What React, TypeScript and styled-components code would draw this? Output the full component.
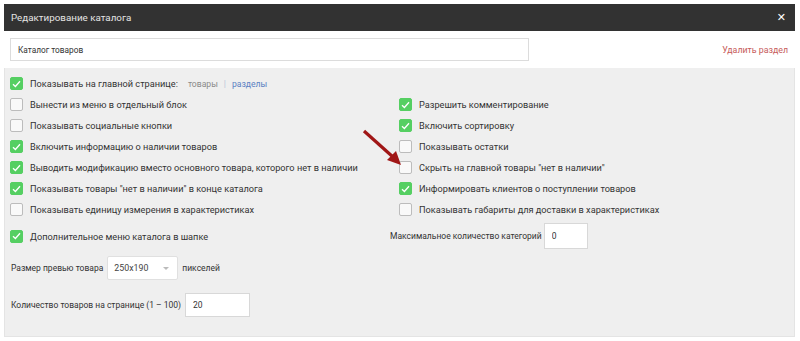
import styled, { createGlobalStyle } from 'styled-components';

const GlobalStyle = createGlobalStyle`
  body {
    margin: 0;
    background: #ffffff;
    font-family: Roboto, "Liberation Sans", Arial, sans-serif;
    color: #333333;
  }
`;

const Panel = styled.div`
  width: 791px;
  margin: 4px 0 0 4px;
  position: relative;
`;

const Header = styled.div`
  height: 27px;
  background: #323232;
  color: #e4e4e4;
  display: flex;
  align-items: center;
  justify-content: space-between;
  padding: 0 9px 0 7px;
  font-size: 9.8px;
`;

const CloseButton = styled.button`
  background: none;
  border: none;
  color: #ffffff;
  font-size: 11px;
  font-weight: bold;
  line-height: 1;
  padding: 0;
  cursor: pointer;
  font-family: "DejaVu Sans", sans-serif;
`;

const NameRow = styled.div`
  height: 37px;
  background: #ffffff;
  display: flex;
  align-items: center;
  justify-content: space-between;
  padding: 0 7px 0 6px;
  box-sizing: border-box;
`;

const NameInput = styled.input`
  width: 519px;
  height: 23px;
  box-sizing: border-box;
  border: 1px solid #dcdcdc;
  padding: 0 7px;
  font-family: inherit;
  font-size: 8.3px;
  color: #333;
  outline: none;
`;

const DeleteLink = styled.a`
  color: #c65a5a;
  font-size: 8.8px;
  cursor: pointer;
`;

const Body = styled.div`
  background: #efefef;
  border: 1px solid #e4e4e4;
  border-top: none;
  padding: 5px 6px 19px 5px;
  height: 269px;
  box-sizing: border-box;
  position: relative;
`;

const OptionsGrid = styled.div`
  display: grid;
  grid-template-columns: 389px 1fr;
  grid-auto-rows: 21px;
`;

const Option = styled.label`
  display: flex;
  align-items: center;
  gap: 7px;
  font-size: 9.2px;
  white-space: nowrap;
  cursor: pointer;
`;

const Box = styled.span<{ $checked?: boolean }>`
  width: 13px;
  height: 13px;
  box-sizing: border-box;
  border-radius: 2px;
  flex-shrink: 0;
  display: flex;
  align-items: center;
  justify-content: center;
  background: ${(p) => (p.$checked ? '#55cf62' : '#f9f9f9')};
  border: 1px solid ${(p) => (p.$checked ? '#55cf62' : '#bcbcbc')};
`;

const Muted = styled.span`
  color: #8a8a8a;
  font-size: 8.6px;
  margin-left: 3px;
`;

const Sep = styled.span`
  color: #b8c4d8;
  font-size: 8.6px;
  margin: 0 6px;
`;

const Blue = styled.span`
  color: #5a80c2;
  font-size: 8.6px;
`;

const FieldsRow = styled.div`
  display: grid;
  grid-template-columns: 389px 1fr;
  align-items: center;
  margin-top: 3px;
`;

const Field = styled.div<{ $shift?: number; $gap?: number }>`
  display: flex;
  align-items: center;
  gap: ${(p) => p.$gap ?? 4}px;
  font-size: 8.5px;
  white-space: nowrap;
  margin-left: ${(p) => p.$shift ?? 0}px;
`;

const SmallInput = styled.input<{ $w: number; $h: number }>`
  width: ${(p) => p.$w}px;
  height: ${(p) => p.$h}px;
  box-sizing: border-box;
  border: 1px solid #d8d8d8;
  background: #fff;
  padding: 0 7px;
  font-family: inherit;
  font-size: 8.5px;
  color: #333;
  outline: none;
`;

const Select = styled.div`
  width: 71px;
  height: 24px;
  box-sizing: border-box;
  border: 1px solid #e0e0e0;
  border-radius: 2px;
  background: #fff;
  display: flex;
  align-items: center;
  justify-content: space-between;
  padding: 0 8px 0 6px;
  font-size: 8.8px;
  color: #444;
`;

const Caret = styled.span`
  width: 0;
  height: 0;
  border-left: 3px solid transparent;
  border-right: 3px solid transparent;
  border-top: 3px solid #bbb;
`;

const FieldBlock = styled.div<{ $top: number }>`
  margin-top: ${(p) => p.$top}px;
`;

const Arrow = styled.svg`
  position: absolute;
  left: 357px;
  top: 61px;
  pointer-events: none;
`;

const Check = () => (
  <svg width="9" height="8" viewBox="0 0 9 8">
    <path d="M1 4.2 L3.4 6.5 L8 1.2" fill="none" stroke="#fff" strokeWidth="1.3" />
  </svg>
);

type Opt = { text: string; checked: boolean } | null;

const rows: [Opt, Opt][] = [
  [{ text: 'Вынести из меню в отдельный блок', checked: false }, { text: 'Разрешить комментирование', checked: true }],
  [{ text: 'Показывать социальные кнопки', checked: false }, { text: 'Включить сортировку', checked: true }],
  [{ text: 'Включить информацию о наличии товаров', checked: true }, { text: 'Показывать остатки', checked: false }],
  [
    { text: 'Выводить модификацию вместо основного товара, которого нет в наличии', checked: true },
    { text: 'Скрыть на главной товары "нет в наличии"', checked: false },
  ],
  [
    { text: 'Показывать товары "нет в наличии" в конце каталога', checked: true },
    { text: 'Информировать клиентов о поступлении товаров', checked: true },
  ],
  [
    { text: 'Показывать единицу измерения в характеристиках', checked: false },
    { text: 'Показывать габариты для доставки в характеристиках', checked: false },
  ],
];

const CheckOption = ({ opt }: { opt: Opt }) =>
  opt ? (
    <Option>
      <Box $checked={opt.checked}>{opt.checked && <Check />}</Box>
      {opt.text}
    </Option>
  ) : (
    <div />
  );

export default function App() {
  return (
    <>
      <GlobalStyle />
      <Panel>
        <Header>
          <span>Редактирование каталога</span>
          <CloseButton>✕</CloseButton>
        </Header>
        <NameRow>
          <NameInput defaultValue="Каталог товаров" />
          <DeleteLink>Удалить раздел</DeleteLink>
        </NameRow>
        <Body>
          <OptionsGrid>
            <Option>
              <Box $checked>
                <Check />
              </Box>
              Показывать на главной странице:
              <span>
                <Muted>товары</Muted>
                <Sep>|</Sep>
                <Blue>разделы</Blue>
              </span>
            </Option>
            <div />
            {rows.map(([l, r], i) => [
              <CheckOption key={`l${i}`} opt={l} />,
              <CheckOption key={`r${i}`} opt={r} />,
            ])}
          </OptionsGrid>
          <FieldsRow>
            <CheckOption opt={{ text: 'Дополнительное меню каталога в шапке', checked: true }} />
            <Field $shift={-9} $gap={2}>
              Максимальное количество категорий
              <SmallInput $w={44} $h={26} defaultValue="0" />
            </Field>
          </FieldsRow>
          <FieldBlock $top={7}>
            <Field $shift={1}>
              Размер превью товара
              <Select>
                <span>250x190</span>
                <Caret />
              </Select>
              пикселей
            </Field>
          </FieldBlock>
          <FieldBlock $top={13}>
            <Field $shift={1}>
              Количество товаров на странице (1 – 100)
              <SmallInput $w={65} $h={24} defaultValue="20" />
            </Field>
          </FieldBlock>
          <Arrow width="44" height="40" viewBox="0 0 44 40">
            <line x1="2" y1="2" x2="31" y2="28" stroke="#a01616" strokeWidth="3.2" />
            <polygon points="39,36 25,31 34,22" fill="#a01616" />
          </Arrow>
        </Body>
      </Panel>
    </>
  );
}
